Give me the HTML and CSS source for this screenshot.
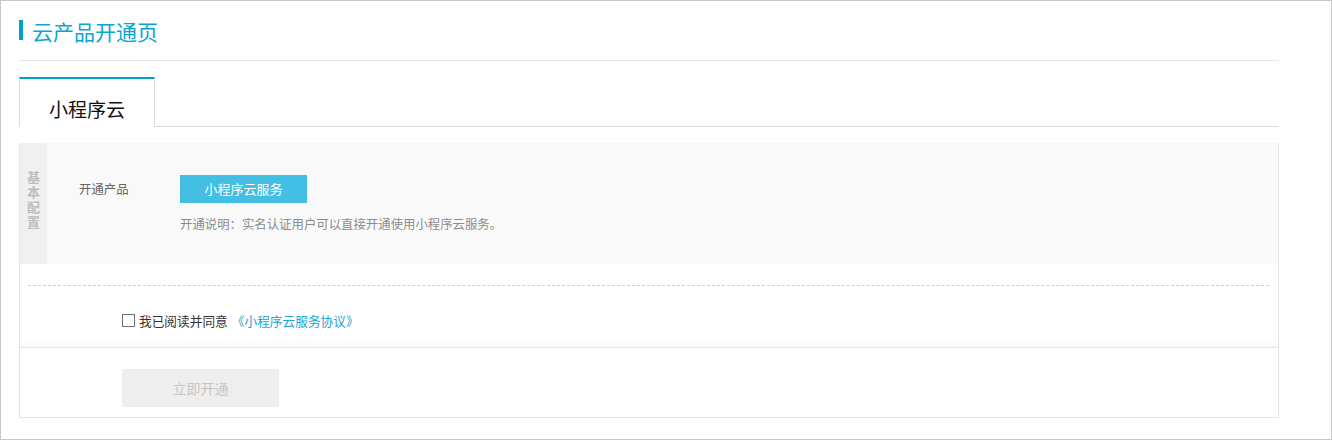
FILE: index.html
```html
<!DOCTYPE html>
<html lang="zh-CN">
<head>
<meta charset="utf-8">
<title>云产品开通页</title>
<link rel="stylesheet" href="styles.css">
</head>
<body>
<div class="page">
  <div class="header">
    <div class="title-row">
      <span class="title-bar"></span>
      <h1 class="title">云产品开通页</h1>
    </div>
  </div>
  <div class="tabs">
    <div class="tab tab-active">小程序云</div>
  </div>
  <div class="panel">
    <div class="basic">
      <div class="side-label"><span class="side-text">基本配置</span></div>
      <div class="basic-body">
        <div class="form-row">
          <span class="form-label">开通产品</span>
          <div class="form-value">
            <span class="product-btn">小程序云服务</span>
            <p class="desc">开通说明：实名认证用户可以直接开通使用小程序云服务。</p>
          </div>
        </div>
      </div>
    </div>
    <div class="agree-area">
      <div class="dash"></div>
      <label class="agree"><span class="checkbox"></span><span class="agree-text">我已阅读并同意</span><a class="agree-link">《小程序云服务协议》</a></label>
    </div>
    <div class="footer">
      <button class="submit" disabled>立即开通</button>
    </div>
  </div>
</div>
</body>
</html>
```

FILE: styles.css
```css
* { box-sizing: border-box; }
html, body { margin: 0; padding: 0; background: #fff; }
body {
  font-family: "Noto Sans CJK SC", "Noto Sans", "Liberation Sans", sans-serif;
  font-size: 12.4px;
  color: #333;
}
.page {
  width: 1332px;
  height: 440px;
  border: 1px solid #c8c8c8;
  padding: 19px 0 0 18px;
}
.header {
  width: 1260px;
  padding-bottom: 20px;
  border-bottom: 1px solid #e4e4e4;
}
.title-row {
  display: flex;
  align-items: center;
  height: 20px;
}
.title-bar {
  width: 4px;
  height: 20px;
  background: #00a2ca;
}
.title {
  margin: 0 0 0 9px;
  font-size: 21px;
  line-height: 20px;
  font-weight: normal;
  color: #0aa6d0;
  position: relative;
  top: 1px;
}
.tabs {
  width: 1260px;
  margin-top: 16px;
  height: 50px;
  border-bottom: 1px solid #dcdcdc;
  display: flex;
}
.tab {
  width: 136px;
  height: 50px;
  border-top: 2px solid #00a2ca;
  border-left: 1px solid #dcdcdc;
  border-right: 1px solid #dcdcdc;
  background: #fff;
  font-size: 19px;
  line-height: 36px;
  text-align: center;
  color: #111;
  padding-top: 12px;
}
.panel {
  width: 1260px;
  margin-top: 16px;
  border: 1px solid #e4e4e4;
  border-top: none;
}
.basic {
  display: flex;
  height: 121px;
  background: #f9f9f9;
}
.side-label {
  width: 27px;
  background: #f0f0f0;
  display: flex;
  justify-content: center;
  padding-top: 28px;
}
.side-text {
  writing-mode: vertical-rl;
  text-orientation: upright;
  font-size: 13px;
  line-height: 15px;
  letter-spacing: 2px;
  font-weight: bold;
  color: #bdbdbd;
}
.basic-body {
  flex: 1;
  padding: 32px 0 0 32px;
}
.form-row {
  display: flex;
}
.form-label {
  width: 101px;
  line-height: 28px;
  color: #666;
}
.form-value {
  display: flex;
  flex-direction: column;
  align-items: flex-start;
}
.product-btn {
  width: 127px;
  height: 28px;
  line-height: 28px;
  text-align: center;
  background: #43bfe3;
  color: #fff;
  font-size: 13px;
}
.desc {
  margin: 12px 0 0;
  line-height: 18px;
  color: #8c8c8c;
}
.agree-area {
  height: 83px;
  padding-top: 21px;
}
.dash {
  margin: 0 9px 0 8px;
  border-top: 1px dashed #cfcfcf;
}
.agree {
  display: flex;
  align-items: center;
  margin: 24px 0 0 102px;
  height: 20px;
  font-size: 12.7px;
}
.checkbox {
  width: 13px;
  height: 13px;
  border: 1px solid #707070;
  background: #fff;
  margin-right: 4px;
}
.agree-text {
  color: #333;
  margin-right: 4px;
}
.agree-link {
  color: #1fa3d3;
  text-decoration: none;
}
.footer {
  border-top: 1px solid #e4e4e4;
  box-shadow: 0 -3px 5px rgba(0, 0, 0, 0.035);
  padding: 21px 0 10px 102px;
}
.submit {
  display: block;
  width: 157px;
  height: 38px;
  border: none;
  border-radius: 3px;
  background: #eeeeee;
  color: #c6c6c6;
  font-family: inherit;
  font-size: 14px;
  padding: 0;
}
```
